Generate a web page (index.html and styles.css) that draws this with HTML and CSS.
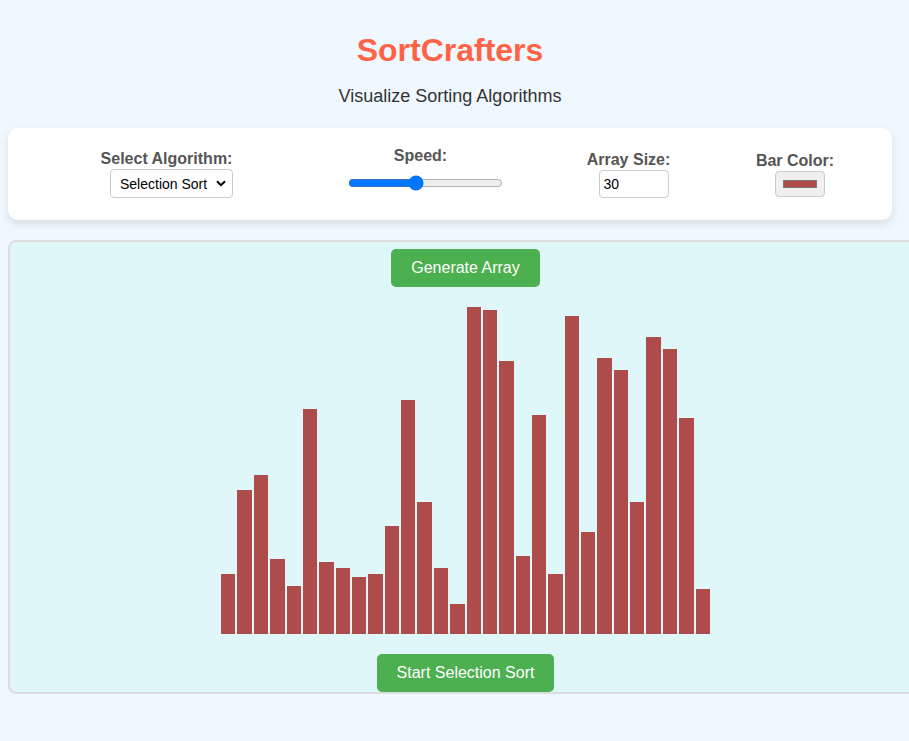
FILE: index.html
```html
<!DOCTYPE html>
<html lang="en">
<head>
<meta charset="UTF-8">
<title>SortCrafters</title>
<link rel="stylesheet" href="styles.css">
</head>
<body>
  <header class="header">
    <h1 class="title">SortCrafters</h1>
    <p class="subtitle">Visualize Sorting Algorithms</p>
  </header>

  <section class="controls">
    <div class="control">
      <label class="control-label" for="algo">Select Algorithm:</label>
      <select id="algo" class="algo-select">
        <option>Selection Sort</option>
        <option>Bubble Sort</option>
        <option>Insertion Sort</option>
      </select>
    </div>
    <div class="control">
      <label class="control-label" for="speed">Speed:</label>
      <input id="speed" class="speed-range" type="range" min="0" max="100" value="43">
    </div>
    <div class="control">
      <label class="control-label" for="size">Array Size:</label>
      <input id="size" class="size-input" type="number" value="30">
    </div>
    <div class="control">
      <label class="control-label" for="color">Bar Color:</label>
      <input id="color" class="color-input" type="color" value="#ad4c4b">
    </div>
  </section>

  <main class="visualizer">
    <button class="btn">Generate Array</button>
    <div class="bars">
      <div class="bar" style="height:60px"></div>
      <div class="bar" style="height:144px"></div>
      <div class="bar" style="height:159px"></div>
      <div class="bar" style="height:75px"></div>
      <div class="bar" style="height:48px"></div>
      <div class="bar" style="height:225px"></div>
      <div class="bar" style="height:72px"></div>
      <div class="bar" style="height:66px"></div>
      <div class="bar" style="height:57px"></div>
      <div class="bar" style="height:60px"></div>
      <div class="bar" style="height:108px"></div>
      <div class="bar" style="height:234px"></div>
      <div class="bar" style="height:132px"></div>
      <div class="bar" style="height:66px"></div>
      <div class="bar" style="height:30px"></div>
      <div class="bar" style="height:327px"></div>
      <div class="bar" style="height:324px"></div>
      <div class="bar" style="height:273px"></div>
      <div class="bar" style="height:78px"></div>
      <div class="bar" style="height:219px"></div>
      <div class="bar" style="height:60px"></div>
      <div class="bar" style="height:318px"></div>
      <div class="bar" style="height:102px"></div>
      <div class="bar" style="height:276px"></div>
      <div class="bar" style="height:264px"></div>
      <div class="bar" style="height:132px"></div>
      <div class="bar" style="height:297px"></div>
      <div class="bar" style="height:285px"></div>
      <div class="bar" style="height:216px"></div>
      <div class="bar" style="height:45px"></div>
    </div>
    <button class="btn btn-start">Start Selection Sort</button>
  </main>
</body>
</html>
```
FILE: styles.css
```css
html, body {
  overflow-x: hidden;
}

body {
  margin: 0;
  padding: 0 17px 0 8px;
  background: #f0f8ff;
  font-family: Arial, "Liberation Sans", sans-serif;
  color: #333;
}

.header {
  padding-top: 32px;
  text-align: center;
}

.title {
  margin: 0 0 17px;
  font-size: 32px;
  line-height: 37px;
  font-weight: bold;
  color: #ff6347;
}

.subtitle {
  margin: 0 0 21px;
  font-size: 18px;
  line-height: 21px;
  color: #333;
}

.controls {
  display: grid;
  grid-template-columns: 327px 181px 235px 98px;
  align-items: center;
  justify-items: center;
  padding: 19px 0;
  background: #fff;
  border-radius: 10px;
  box-shadow: 0 4px 8px rgba(0, 0, 0, 0.1);
}

.control {
  display: flex;
  flex-direction: column;
  align-items: center;
}

.control-label {
  margin-right: 10px;
  font-size: 16px;
  line-height: 18px;
  font-weight: bold;
  color: #555;
}

.algo-select {
  -webkit-appearance: none;
  appearance: none;
  box-sizing: border-box;
  margin-top: 1px;
  width: 123px;
  height: 29px;
  padding: 0 24px 0 9px;
  font-family: Arial, "Liberation Sans", sans-serif;
  font-size: 14px;
  color: #000;
  background-color: #fff;
  background-image: url("data:image/svg+xml,%3Csvg xmlns='http://www.w3.org/2000/svg' width='10' height='7' viewBox='0 0 10 7'%3E%3Cpath d='M1 1.2 L5 5.2 L9 1.2' fill='none' stroke='%23000' stroke-width='2'/%3E%3C/svg%3E");
  background-repeat: no-repeat;
  background-position: right 6px center;
  background-size: 10px 7px;
  border: 1px solid #ccc;
  border-radius: 4px;
}

.speed-range {
  width: 155px;
  margin: 10px 2px;
}

.size-input {
  box-sizing: border-box;
  margin-top: 1px;
  width: 70px;
  height: 28px;
  padding: 0 4px;
  font-family: Arial, "Liberation Sans", sans-serif;
  font-size: 14px;
  color: #000;
  border: 1px solid #ccc;
  border-radius: 4px;
}

.color-input {
  box-sizing: border-box;
  margin-top: 1px;
  width: 50px;
  height: 26px;
  padding: 0;
  background: #efefef;
  border: 1px solid #ccc;
  border-radius: 4px;
  cursor: pointer;
}

.color-input::-webkit-color-swatch-wrapper {
  padding: 8px 7px;
}

.color-input::-webkit-color-swatch {
  border: 1px solid #777;
  border-radius: 0;
}

.visualizer {
  box-sizing: border-box;
  width: calc(100% + 31px);
  margin-top: 20px;
  padding: 7px 0 0;
  display: flex;
  flex-direction: column;
  align-items: center;
  background: #e0f7fa;
  border: 2px solid #ddd;
  border-radius: 8px;
}

.btn {
  padding: 10px 20px;
  font-family: Arial, "Liberation Sans", sans-serif;
  font-size: 16px;
  line-height: 18px;
  color: #fff;
  background: #4caf50;
  border: none;
  border-radius: 5px;
  cursor: pointer;
}

.bars {
  height: 347px;
  display: flex;
  align-items: flex-end;
  justify-content: center;
}

.bar {
  width: 14.37px;
  margin: 0 1px;
  background: #ad4c4b;
}

.btn-start {
  margin-top: 20px;
}
```
